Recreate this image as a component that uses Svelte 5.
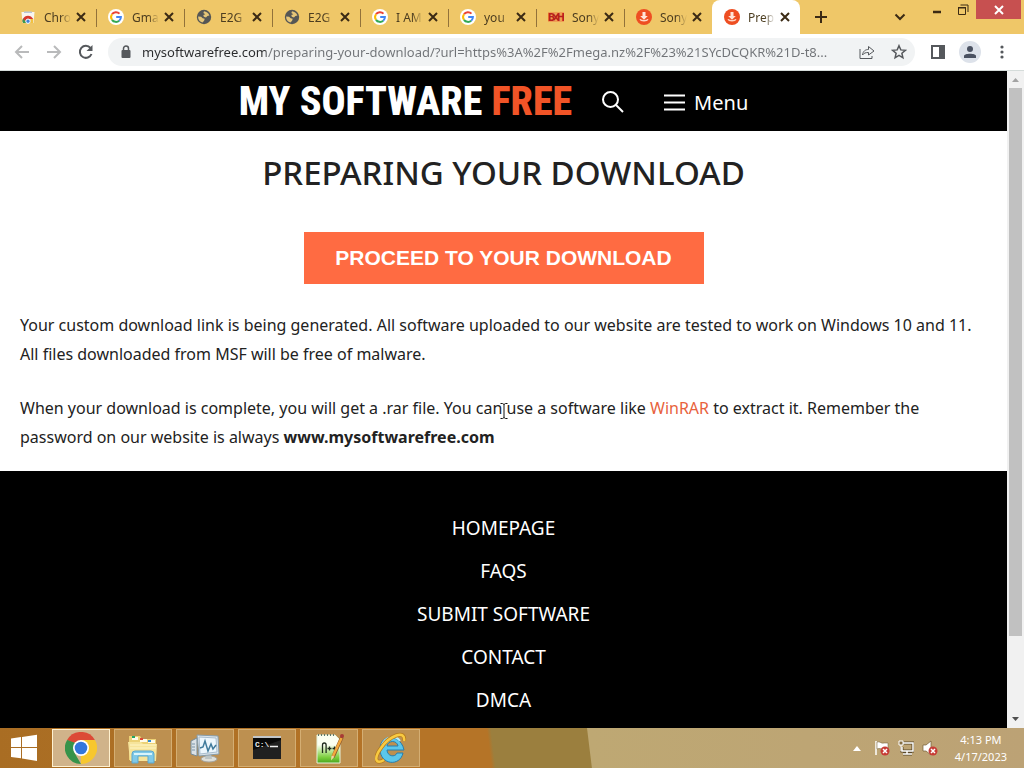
<script lang="ts">
    const tabs = [
        { title: 'Chro', icon: 'store' },
        { title: 'Gma', icon: 'google' },
        { title: 'E2G', icon: 'globe' },
        { title: 'E2G', icon: 'globe' },
        { title: 'I AM', icon: 'google' },
        { title: 'you', icon: 'google' },
        { title: 'Sony', icon: 'bh' },
        { title: 'Sony', icon: 'msf' },
        { title: 'Prep', icon: 'msf', active: true }
    ];

    const footerLinks = ['HOMEPAGE', 'FAQS', 'SUBMIT SOFTWARE', 'CONTACT', 'DMCA'];

    const apps = [
        { name: 'Google Chrome', icon: 'chrome', active: true },
        { name: 'File Explorer', icon: 'explorer' },
        { name: 'Task Manager', icon: 'monitor' },
        { name: 'Command Prompt', icon: 'cmd' },
        { name: 'Notepad++', icon: 'npp' },
        { name: 'Internet Explorer', icon: 'ie' }
    ];

    let url = $state('mysoftwarefree.com/preparing-your-download/?url=https%3A%2F%2Fmega.nz%2F%23%21SYcDCQKR%21D-t8...');
</script>

{#snippet favicon(icon)}
    <svg class="favicon" viewBox="0 0 16 16" aria-hidden="true">
        {#if icon === 'google'}
            <circle cx="8" cy="8" r="8" fill="#fff" />
            <g fill="none" stroke-width="2">
                <path d="M4 5.2A4.9 4.9 0 0 1 11.5 4.6" stroke="#ea4335" />
                <path d="M4 5.2A4.9 4.9 0 0 0 4 10.8" stroke="#fbbc05" />
                <path d="M4 10.8A4.9 4.9 0 0 0 11.2 11.7" stroke="#34a853" />
                <path d="M8.2 8H12.9A4.9 4.9 0 0 1 11.2 11.7" stroke="#4285f4" />
            </g>
        {:else if icon === 'globe'}
            <circle cx="8" cy="8" r="7.2" fill="#555655" />
            <path d="M8 2.2c2 .3 4.700 1.800 5.400 4.200l-2 .7-1.400 1.400-2.200-.8-.5-1.800 2-.7-1.900-1.100zM2.100 7.600l3 .1 1.600 1.600 2 .5-.6 1.900-1.600 1.900C3.800 13 2 10.700 2.100 7.600z" fill="#e5c578" />
        {:else if icon === 'bh'}
            <path d="M0 3h16v10H0z" fill="#efa055" />
            <text x="0" y="12" font-family="Roboto" font-size="11" font-weight="900" fill="#b9201b">B</text>
            <text x="9" y="12" font-family="Roboto" font-size="11" font-weight="900" fill="#b9201b">H</text>
            <path d="M6 11l4-6M6 6l4 5" stroke="#b9201b" stroke-width="1.500" />
        {:else if icon === 'msf'}
            <circle cx="8" cy="8" r="8" fill="#ee4e22" />
            <path d="M6.500 3h3v4h2.300L8 10.700 4.200 7h2.300z" fill="#ffe5d9" />
            <path d="M4 10.300c1 2 7 2 8 0" fill="none" stroke="#ffd6c5" stroke-width="1.400" />
        {:else}
            <path d="M1.500 3h13l-1 11h-11z" fill="#f8f5f0" />
            <path d="M4 2.500h8V4H4z" fill="#b9c6d8" />
            <path d="M3 13.500a5 5 0 0 1-.2-3.500C5 5.500 11 5.500 13.200 10H8z" fill="#d7392f" />
            <path d="M3 14a5 5 0 0 1 0-4.500L7 14z" fill="#3e9a50" />
            <path d="M13 14H9l1.500-4h2.700z" fill="#f2c13f" />
            <circle cx="8" cy="12.200" r="2.200" fill="#3f80d8" stroke="#fff" />
        {/if}
    </svg>
{/snippet}

{#snippet appIcon(icon)}
    <svg class="app-icon" viewBox="0 0 32 32" aria-hidden="true">
        {#if icon === 'chrome'}
            <path d="M16 16L2.100 8A16 16 0 0 1 29.900 8z" fill="#dc4a36" />
            <path d="M16 16L29.900 8A16 16 0 0 1 16 32z" fill="#f7c72e" />
            <path d="M16 16L9 20 16 32A16 16 0 0 1 2.100 8z" fill="#36934a" />
            <path d="M16 32l7-12-7-4z" fill="#f7c72e" />
            <path d="M2.100 8l7 12 4-8z" fill="#36934a" />
            <path d="M16 8h13.900L23 20z" fill="#f7c72e" />
            <circle cx="16" cy="16" r="8" fill="#fff" />
            <circle cx="16" cy="16" r="6.300" fill="#3376dc" />
        {:else if icon === 'explorer'}
            <path d="M2 4h11l2 3h14v21H2z" fill="#ecd175" />
            <path d="M5 5h6v3H5zM13 7h7v3h-7zM21 8h7v3h-7z" fill="#fffbe9" />
            <path d="M5 4h3v2H5z" fill="#20a565" />
            <path d="M13 6h3v2h-3z" fill="#dc4b38" />
            <path d="M21 8h3v2h-3z" fill="#308bd0" />
            <path d="M1 10h13l2 2h14l-1 17H3z" fill="#f6e49b" />
            <path d="M3 13h26M3 16h26" stroke="#fff5c4" />
            <path d="M5 31V22q0-3 3-3h16q3 0 3 3v9h-6v-7H11v7z" fill="#80c9e8" stroke="#5aa7ce" />
            <path d="M7 22h18" stroke="#d8f4fb" stroke-width="2" />
        {:else if icon === 'monitor'}
            <path d="M2 9l6-3v18l-6-2z" fill="#dbe2e6" stroke="#778c98" />
            <path d="M3 12h3M3 15h3M3 18h3" stroke="#7895a9" />
            <ellipse cx="20" cy="27" rx="8" ry="3" fill="#dedfd9" stroke="#a4a49f" />
            <path d="M17 22h5l1 5h-7z" fill="#bcc4c4" />
            <path d="M8 3l21 1 1 18L10 24z" fill="#dce6ed" stroke="#879dab" />
            <path d="M10 5l17 1 1 14-17 2z" fill="#edf7fd" stroke="#a9bdcd" />
            <path d="M11 16l3-1 2-6 3 10 3-7 2 5 3-4" fill="none" stroke="#407b9c" stroke-width="1.500" />
        {:else if icon === 'cmd'}
            <rect x="2" y="4" width="28" height="23" fill="#090909" />
            <path d="M2 27V18L30 8v19z" fill="#202020" />
            <path d="M2 5h28" stroke="#c3c6c8" stroke-width="2" />
            <text x="4" y="15" font-family="Liberation Mono" font-size="8" font-weight="700" fill="#eee">C:\</text>
            <path d="M19 14.500h8" stroke="#eee" stroke-width="1.500" />
        {:else if icon === 'npp'}
            <defs>
                <linearGradient id="npp-page" x2="0" y2="1">
                    <stop offset=".35" stop-color="#fbfff1" />
                    <stop offset=".8" stop-color="#7bce3d" />
                    <stop offset="1" stop-color="#47a51d" />
                </linearGradient>
            </defs>
            <path d="M4 3h18l5 5v23H4z" fill="url(#npp-page)" stroke="#e6f2db" />
            <path d="M5 3h16" stroke="#5d7667" stroke-width="2" stroke-dasharray="1 2" />
            <path d="M9.500 21V13q0-2 1.800-2t1.800 2v8M14.500 16.500h4M16.500 14.500v4M19.500 16.500h4M21.500 14.500v4" fill="none" stroke="#1f2a1c" stroke-width="1.300" />
            <path d="M29 5L20 25" stroke="#8b562a" stroke-width="3.500" />
            <path d="M28.500 6L20 24" stroke="#f3a93d" stroke-width="2.500" />
            <path d="M18.500 23.500l3 1-3.500 4z" fill="#f4d7a4" />
            <circle cx="29" cy="4" r="2" fill="#a83a35" />
        {:else}
            <path d="M29 18H12c0 6 8 8 10 3h6c-3 14-23 12-23-4S26 2 29 18zM12 14h11c-1-6-10-6-11 0z" fill="#5bc7eb" stroke="#277eae" />
            <path d="M7 13c3-8 13-11 18-4" fill="none" stroke="#b6efff" stroke-width="2" />
            <path d="M29 9c2-12-15-5-23 7C-2 27 1 33 9 28" fill="none" stroke="#b67b1f" stroke-width="4" />
            <path d="M29 9c2-12-15-5-23 7C-2 27 1 33 9 28" fill="none" stroke="#f8ca41" stroke-width="2.500" />
        {/if}
    </svg>
{/snippet}

<div class="screen">
    <div class="tab-strip">
        <div class="tabs">
            {#each tabs as tab}
                <div class="tab" class:active={tab.active}>
                    {@render favicon(tab.icon)}
                    <button class="tab-title">{tab.title}</button>
                    <button class="tab-close" aria-label="Close {tab.title}">
                        <svg viewBox="0 0 10 10"><path d="M1 1l8 8M9 1L1 9" /></svg>
                    </button>
                </div>
            {/each}
        </div>
        <button class="new-tab" aria-label="New tab">
            <svg width="14" height="14" viewBox="0 0 14 14"><path d="M7 1v12M1 7h12" /></svg>
        </button>
        <div class="window-controls">
            <button class="tab-search" aria-label="Search tabs">
                <svg width="12" height="8" viewBox="0 0 12 8"><path d="M1.500 1.500L6 6l4.500-4.500" /></svg>
            </button>
            <button class="minimize" aria-label="Minimize">
                <svg width="10" height="10" viewBox="0 0 10 10"><path d="M1 7h8" stroke-width="2.500" /></svg>
            </button>
            <button class="restore" aria-label="Restore">
                <svg width="12" height="12" viewBox="0 0 12 12"><path d="M1.500 4h7v6.500h-7zM1 3.500h8M3.500 1H11v7" /></svg>
            </button>
            <button class="close" aria-label="Close window">
                <svg width="10" height="10" viewBox="0 0 10 10"><path d="M1 1l8 8M9 1L1 9" /></svg>
            </button>
        </div>
    </div>

    <div class="toolbar">
        <button aria-label="Back">
            <svg class="dim" width="16" height="16" viewBox="0 0 16 16"><path d="M15 8H2M8 2L2 8l6 6" /></svg>
        </button>
        <button aria-label="Forward">
            <svg class="dim" width="16" height="16" viewBox="0 0 16 16"><path d="M1 8h13M8 2l6 6-6 6" /></svg>
        </button>
        <button aria-label="Reload">
            <svg width="16" height="16" viewBox="0 0 16 16">
                <path d="M13.500 10A6 6 0 1 1 12.500 4" />
                <path d="M14.500 1v6h-6z" fill="#55585c" stroke="none" />
            </svg>
        </button>
        <div class="address-bar">
            <svg class="lock" width="10" height="14" viewBox="0 0 10 14">
                <path d="M2.500 6V3.500a2.500 2.500 0 0 1 5 0V6" stroke-width="1.500" />
                <rect x="0.500" y="5" width="9" height="8" rx="1" fill="#55585c" stroke="none" />
            </svg>
            <input type="text" aria-label="Address" bind:value={url} spellcheck="false" />
            <button aria-label="Share">
                <svg width="16" height="16" viewBox="0 0 16 16" class="thin">
                    <path d="M1 5v9.500h12V12" />
                    <path d="M3.500 11c.5-4 3-5.500 6-5.500V2.500L15 7l-5.500 4V8.500c-3 0-4.500.5-6 2.500z" />
                </svg>
            </button>
            <button aria-label="Bookmark this page">
                <svg width="16" height="16" viewBox="0 0 16 16">
                    <path d="M8 1.700l1.800 4.200 4.600.4-3.500 3 1 4.500L8 11.400l-3.900 2.400 1-4.500-3.500-3 4.600-.4z" stroke-width="1.500" />
                </svg>
            </button>
        </div>
        <button aria-label="Side panel">
            <svg width="16" height="16" viewBox="0 0 16 16">
                <path d="M2 2h12v12H2z" />
                <path d="M10 2h4v12h-4z" fill="#55585c" />
            </svg>
        </button>
        <button class="profile" aria-label="Profile">
            <svg width="14" height="14" viewBox="0 0 14 14">
                <circle cx="7" cy="4" r="3" />
                <path d="M1 13v-2c0-3 12-3 12 0v2z" />
            </svg>
        </button>
        <button aria-label="Chrome menu">
            <svg width="4" height="16" viewBox="0 0 4 16">
                <g fill="#55585c" stroke="none">
                    <circle cx="2" cy="3" r="1.600" /><circle cx="2" cy="8" r="1.600" /><circle cx="2" cy="13" r="1.600" />
                </g>
            </svg>
        </button>
    </div>

    <div class="viewport">
        <div class="page">
            <header>
                <a class="logo" href="/">MY SOFTWARE <span>FREE</span></a>
                <button class="search" aria-label="Search">
                    <svg width="22" height="22" viewBox="0 0 22 22"><circle cx="8.500" cy="8.500" r="7.500" /><path d="M14 14l7 7" /></svg>
                </button>
                <button class="menu">
                    <svg width="21" height="17" viewBox="0 0 21 17"><path d="M0 1.500h21M0 8.500h21M0 15.500h21" /></svg>
                    Menu
                </button>
            </header>
            <main>
                <h1>PREPARING YOUR DOWNLOAD</h1>
                <button class="proceed">PROCEED TO YOUR DOWNLOAD</button>
                <p>
                    Your custom download link is being generated. All software uploaded to our website are tested to work on Windows 10 and 11. All files downloaded from MSF will be free of malware.
                </p>
                <p>
                    When your download is complete, you will get a .rar file. You can<span class="cursor-anchor"><svg class="cursor" width="8" height="16" viewBox="0 0 8 16"><path d="M.5.500h2l1.500 1 1.500-1h2M4 1.500v13M.5 15.500h2l1.500-1 1.500 1h2" /></svg></span> use a software like <a href="/winrar">WinRAR</a> to extract it. Remember the password on our website is always <strong>www.mysoftwarefree.com</strong>
                </p>
            </main>
            <footer>
                {#each footerLinks as link}
                    <a href="/">{link}</a>
                {/each}
            </footer>
        </div>
        <div class="scrollbar">
            <svg width="7" height="4" viewBox="0 0 7 4"><path d="M0 4l3.500-4L7 4z" fill="#a3a3a3" /></svg>
            <div class="track"><div class="thumb"></div></div>
            <svg width="7" height="4" viewBox="0 0 7 4"><path d="M0 0l3.500 4L7 0z" fill="#505050" /></svg>
        </div>
    </div>

    <div class="taskbar">
        <button class="start" aria-label="Start">
            <svg width="28" height="28" viewBox="0 0 28 28">
                <path d="M1 4.500l10-1.400V13H1zM12 2.900L27 .700V13H12zM1 14h10v10.300L1 23zM12 14h15v13l-15-2.400z" fill="#fff" />
            </svg>
        </button>
        {#each apps as app}
            <button class="app" class:active={app.active} aria-label={app.name}>{@render appIcon(app.icon)}</button>
        {/each}
        <div class="tray">
            <svg width="8" height="5" viewBox="0 0 8 5"><path d="M0 5l4-5 4 5z" fill="#fff" /></svg>
            <svg width="16" height="16" viewBox="0 0 16 16">
                <path d="M2 1v14" stroke="#fff" stroke-width="1.500" />
                <path d="M3 2c3-1 4 2 7 1h4v6H9c-3 0-3-1-6 0z" fill="#fff" stroke="#6b572f" stroke-width=".5" />
                <circle cx="11" cy="11" r="4.500" fill="#c73c36" />
                <path d="M9 9l4 4M13 9l-4 4" stroke="#fff" stroke-width="1.500" />
            </svg>
            <svg width="16" height="16" viewBox="0 0 16 16">
                <path d="M5 3h10v8H4V7M9 11v3M5 14h9" fill="none" stroke="#5a4829" stroke-width="3" />
                <path d="M5 3h10v8H4V7M9 11v3M5 14h9" fill="none" stroke="#fff" stroke-width="1.500" />
                <path d="M1 1h4v4H1zM3 5v6" fill="#846d42" stroke="#fff" />
            </svg>
            <svg width="16" height="16" viewBox="0 0 16 16">
                <path d="M1 5h3l5-4v14l-5-4H1z" fill="#fff" stroke="#725c34" stroke-width=".7" />
                <circle cx="11" cy="11" r="4.500" fill="#c73c36" />
                <path d="M9 9l4 4M13 9l-4 4" stroke="#fff" stroke-width="1.500" />
            </svg>
            <div class="clock"><span>4:13 PM</span><span>4/17/2023</span></div>
        </div>
    </div>
</div>

<style>
:global(body) {
    margin: 0;
    background: #000;
}
.screen {
    display: flex;
    flex-direction: column;
    height: 100vh;
    overflow: hidden;
    font-family: "Noto Sans", "Open Sans", sans-serif;
    color: #222;
}
button {
    display: flex;
    align-items: center;
    justify-content: center;
    padding: 0;
    border: 0;
    background: none;
    color: inherit;
    font-family: inherit;
}
svg {
    flex: none;
}

/* browser tabs */
.tab-strip {
    display: flex;
    flex: none;
    height: 34px;
    padding-left: 8px;
    background: #efc768;
}
.tab-strip button svg {
    fill: none;
    stroke: #3b2a14;
    stroke-width: 2;
}
.tabs {
    display: flex;
}
.tab {
    display: flex;
    align-items: center;
    box-sizing: border-box;
    width: 88px;
    padding: 0 7px 0 12px;
    position: relative;
}
.tab:not(.active)::after {
    content: '';
    position: absolute;
    right: -1px;
    top: 9px;
    width: 1px;
    height: 18px;
    background: #92723a;
}
.tab:nth-last-child(2)::after {
    display: none;
}
.tab.active {
    border-radius: 8px 8px 0 0;
    background: #fff;
}
.favicon {
    width: 16px;
    height: 16px;
}
.tab-title {
    flex: 1;
    justify-content: flex-start;
    min-width: 0;
    margin-left: 8px;
    font-size: 12px;
    white-space: nowrap;
    color: #4c3d20;
    mask-image: linear-gradient(90deg, #000 60%, transparent);
}
.tab-close {
    width: 16px;
    height: 16px;
    margin-left: 2px;
}
.tab-close svg {
    width: 10px;
    height: 10px;
}
.new-tab {
    width: 28px;
    margin-left: 7px;
}
.window-controls {
    display: flex;
    align-items: flex-start;
    margin-left: auto;
}
.window-controls button {
    height: 20px;
}
.window-controls .tab-search {
    width: 32px;
    height: 34px;
    margin-right: 8px;
}
.minimize,
.restore {
    width: 26px;
}
.window-controls .restore svg {
    stroke-width: 1;
}
.window-controls .close {
    width: 45px;
    height: 19px;
    margin-right: 3px;
    background: #c75050;
}
.window-controls .close svg {
    stroke: #fff;
}

/* browser toolbar */
.toolbar {
    display: flex;
    flex: none;
    align-items: center;
    height: 36px;
    padding: 0 6px;
    border-bottom: 1px solid #d5dcda;
    background: #fff;
}
.toolbar button {
    width: 32px;
    height: 28px;
}
.toolbar svg {
    fill: none;
    stroke: #55585c;
    stroke-width: 2;
}
.toolbar svg.dim {
    stroke: #b9babb;
}
.toolbar svg.thin {
    stroke-width: 1;
}
.address-bar {
    display: flex;
    flex: 1;
    align-items: center;
    min-width: 0;
    height: 28px;
    margin: 0 7px 0 6px;
    padding-left: 13px;
    border-radius: 14px;
    background: #f1f3f4;
}
.address-bar input {
    flex: 1;
    min-width: 0;
    margin-left: 11px;
    padding: 0;
    border: 0;
    outline: 0;
    /* the host name is darker than the rest of the address */
    background: linear-gradient(90deg, #2b2c2e 124px, #707377 124px);
    background-clip: text;
    color: transparent;
    font-family: "Noto Sans", sans-serif;
    font-size: 13px;
}
.toolbar .profile {
    width: 22px;
    height: 22px;
    margin: 0 5px;
    border-radius: 50%;
    background: #dde2ea;
}
.toolbar .profile svg {
    fill: #4b5262;
    stroke: none;
}

/* web page */
.viewport {
    display: flex;
    flex: 1;
    min-height: 0;
}
.page {
    flex: 1;
    min-width: 0;
    overflow: hidden;
    background: #000;
}
header {
    display: flex;
    align-items: center;
    justify-content: center;
    height: 60px;
    padding: 2px 20px 0 0;
    box-sizing: border-box;
    background: #000;
    color: #fff;
}
header svg {
    fill: none;
    stroke: #fff;
    stroke-width: 2;
}
.logo {
    color: #fff;
    font-family: "Roboto Condensed", "Liberation Sans Narrow", "Liberation Sans", sans-serif;
    font-size: 40px;
    font-weight: 800;
    line-height: 58px;
    text-decoration: none;
    white-space: nowrap;
}
.logo span {
    color: #f15427;
}
.search {
    margin-left: 30px;
}
.menu {
    gap: 9px;
    margin-left: 40px;
    font-size: 20px;
}
main {
    padding: 20px 20px 19px;
    background: #fff;
}
h1 {
    margin: 0;
    font-size: 33px;
    font-weight: 500;
    line-height: 44px;
    text-align: center;
}
.proceed {
    width: 400px;
    max-width: 100%;
    height: 52px;
    margin: 37px auto 27px;
    background: #ff6b42;
    color: #fff;
    font-family: "Liberation Sans", Arial, sans-serif;
    font-size: 21px;
    font-weight: 700;
}
p {
    margin: 0 0 25px;
    font-size: 16px;
    line-height: 29px;
}
p:last-child {
    margin-bottom: 0;
}
p a {
    color: #e8623c;
    text-decoration: none;
}
.cursor-anchor {
    position: relative;
}
.cursor {
    position: absolute;
    left: -2px;
    top: 6px;
    fill: none;
    stroke: #111;
}
footer {
    display: flex;
    flex-direction: column;
    align-items: center;
    padding-top: 36px;
}
footer a {
    color: #fff;
    font-size: 19px;
    line-height: 43px;
    text-decoration: none;
}
.scrollbar {
    display: flex;
    flex-direction: column;
    align-items: center;
    width: 17px;
    padding: 7px 0;
    box-sizing: border-box;
    background: #f1f1f1;
}
.track {
    flex: 1;
    width: 13px;
    padding: 6px 0;
}
.thumb {
    height: 88%;
    background: #c1c1c1;
}

/* taskbar */
.taskbar {
    display: flex;
    flex: none;
    height: 40px;
    gap: 4px;
    background: linear-gradient(83deg, #a96d23 0, #b57427 410px, #b57427 488px, #9b7f3e 492px, #9b7f3e 587px, #bea873 588px, #bca275 100%);
}
.start {
    width: 48px;
}
.app {
    box-sizing: border-box;
    width: 58px;
    margin: 1px 0;
    border: 1px solid #d4ae73;
    background: #bd9050;
}
.app.active {
    border-color: #fff1d0;
    background: #d0b38a;
}
.app-icon {
    width: 32px;
    height: 32px;
}
.tray {
    display: flex;
    align-items: center;
    gap: 8px;
    margin-left: auto;
    padding-right: 17px;
    color: #fff;
}
.tray > svg:first-child {
    margin-right: 5px;
}
.clock {
    display: flex;
    flex-direction: column;
    align-items: center;
    margin-left: 9px;
    font-size: 11px;
    line-height: 17px;
}
</style>
